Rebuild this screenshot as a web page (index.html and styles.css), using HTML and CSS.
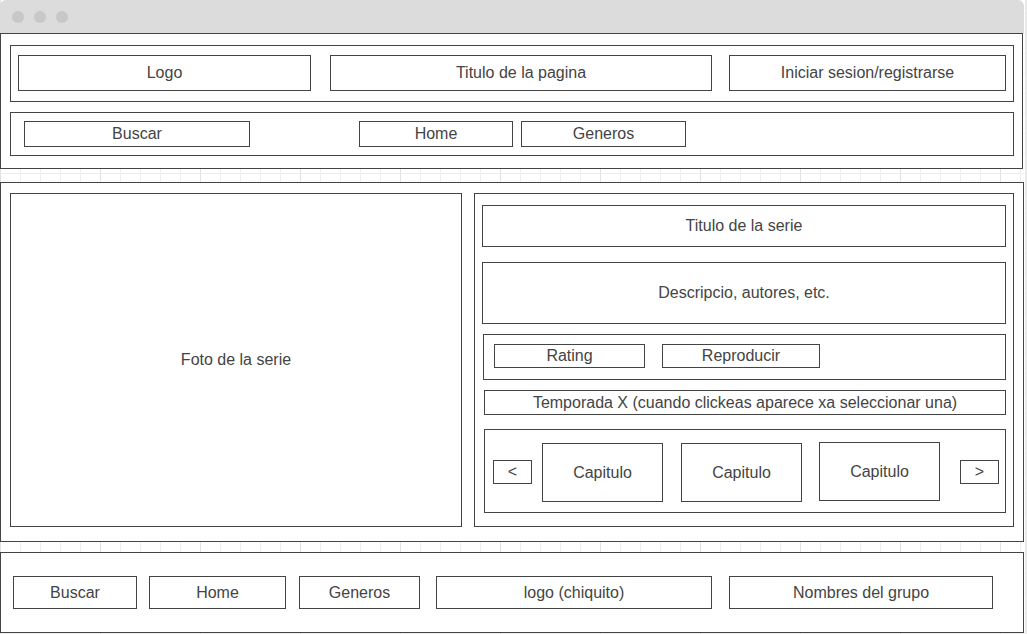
FILE: index.html
```html
<!DOCTYPE html>
<html lang="es">
<head>
<meta charset="utf-8">
<title>Wireframe serie</title>
<link rel="stylesheet" href="styles.css">
</head>
<body>
<div class="page">
  <div class="titlebar">
    <span class="dot"></span><span class="dot"></span><span class="dot"></span>
  </div>

  <header class="header">
    <div class="row row-top">
      <div class="box b-logo">Logo</div>
      <div class="box b-title">Titulo de la pagina</div>
      <div class="box b-login">Iniciar sesion/registrarse</div>
    </div>
    <div class="row row-nav">
      <div class="box b-buscar">Buscar</div>
      <div class="box b-home">Home</div>
      <div class="box b-generos">Generos</div>
    </div>
  </header>

  <main class="main">
    <div class="box foto">Foto de la serie</div>
    <section class="panel">
      <div class="box p-title">Titulo de la serie</div>
      <div class="box p-desc">Descripcio, autores, etc.</div>
      <div class="box p-actions">
        <div class="box a-rating">Rating</div>
        <div class="box a-play">Reproducir</div>
      </div>
      <div class="box p-season">Temporada X (cuando clickeas aparece xa seleccionar una)</div>
      <div class="box p-carousel">
        <div class="box arrow arrow-l">&lt;</div>
        <div class="box cap cap1">Capitulo</div>
        <div class="box cap cap2">Capitulo</div>
        <div class="box cap cap3">Capitulo</div>
        <div class="box arrow arrow-r">&gt;</div>
      </div>
    </section>
  </main>

  <footer class="footer">
    <div class="box f-buscar">Buscar</div>
    <div class="box f-home">Home</div>
    <div class="box f-generos">Generos</div>
    <div class="box f-logo">logo (chiquito)</div>
    <div class="box f-names">Nombres del grupo</div>
  </footer>
</div>
</body>
</html>
```

FILE: styles.css
```css
* { box-sizing: border-box; }

html, body {
  margin: 0;
  padding: 0;
}

body {
  background: #e9e9e9;
  font-family: "Liberation Sans", Arial, sans-serif;
  font-size: 16px;
  color: #444;
  width: 1027px;
  height: 634px;
  overflow: hidden;
}

.page {
  width: 1025px;
  height: 634px;
  background-color: #fff;
  background-image:
    linear-gradient(90deg, #e2e2e2 1px, transparent 1px),
    linear-gradient(90deg, #eeeeee 1px, transparent 1px),
    linear-gradient(#eeeeee 1px, transparent 1px);
  background-size: 100px 100%, 20px 100%, 100% 20px;
  background-position: 0 0, 0 0, 0 13px;
}

.titlebar {
  width: 1024px;
  height: 33px;
  background: #dcdcdc;
  border-radius: 6px 6px 0 0;
  display: flex;
  align-items: center;
  gap: 10px;
  padding-left: 12px;
}

.dot {
  width: 12px;
  height: 12px;
  border-radius: 50%;
  background: #c8c8c8;
}

.box {
  border: 1px solid #444;
  background: #fff;
  display: flex;
  align-items: center;
  justify-content: center;
  white-space: nowrap;
}

/* Header */
.header {
  width: 1023px;
  height: 136px;
  border: 1px solid #444;
  background: #fff;
  padding: 11px 8px 12px 9px;
}

.row {
  border: 1px solid #444;
  display: flex;
  align-items: flex-start;
}

.row-top {
  height: 57px;
  padding: 9px 0 0 7px;
}

.row-nav {
  height: 44px;
  margin-top: 10px;
  padding: 8px 0 0 13px;
}

.b-logo { width: 293px; height: 36px; }
.b-title { width: 382px; height: 36px; margin-left: 19px; }
.b-login { width: 277px; height: 36px; margin-left: 17px; }

.b-buscar { width: 226px; height: 26px; }
.b-home { width: 154px; height: 26px; margin-left: 109px; }
.b-generos { width: 165px; height: 26px; margin-left: 8px; }

/* Main */
.main {
  width: 1024px;
  height: 360px;
  margin-top: 13px;
  border: 1px solid #444;
  background: #fff;
  padding: 10px 0 0 9px;
  display: flex;
  align-items: flex-start;
}

.foto {
  width: 452px;
  height: 334px;
}

.panel {
  width: 540px;
  height: 334px;
  margin-left: 12px;
  border: 1px solid #444;
  padding: 11px 0 0 7px;
  display: flex;
  flex-direction: column;
  align-items: flex-start;
}

.p-title { width: 524px; height: 42px; }
.p-desc { width: 524px; height: 62px; margin-top: 15px; }

.p-actions {
  width: 523px;
  height: 46px;
  margin: 10px 0 0 1px;
  justify-content: flex-start;
  align-items: flex-start;
  padding: 9px 0 0 10px;
}

.a-rating { width: 151px; height: 24px; }
.a-play { width: 158px; height: 24px; margin-left: 17px; }

.p-season {
  width: 522px;
  height: 25px;
  margin: 10px 0 0 2px;
}

.p-carousel {
  width: 522px;
  height: 84px;
  margin: 14px 0 0 2px;
  justify-content: flex-start;
  align-items: flex-start;
  padding-left: 8px;
}

.arrow { width: 39px; height: 24px; margin-top: 30px; }
.arrow-r { margin-left: 20px; }

.cap { width: 121px; height: 59px; margin-top: 13px; }
.cap1 { margin-left: 10px; }
.cap2 { margin-left: 18px; }
.cap3 { margin-left: 17px; margin-top: 12px; }

/* Footer */
.footer {
  width: 1024px;
  height: 81px;
  margin-top: 10px;
  border: 1px solid #444;
  background: #fff;
  display: flex;
  align-items: flex-start;
  padding: 23px 0 0 12px;
}

.footer .box { height: 33px; }
.f-buscar { width: 124px; }
.f-home { width: 137px; margin-left: 12px; }
.f-generos { width: 121px; margin-left: 13px; }
.f-logo { width: 276px; margin-left: 16px; }
.f-names { width: 264px; margin-left: 17px; }
```
